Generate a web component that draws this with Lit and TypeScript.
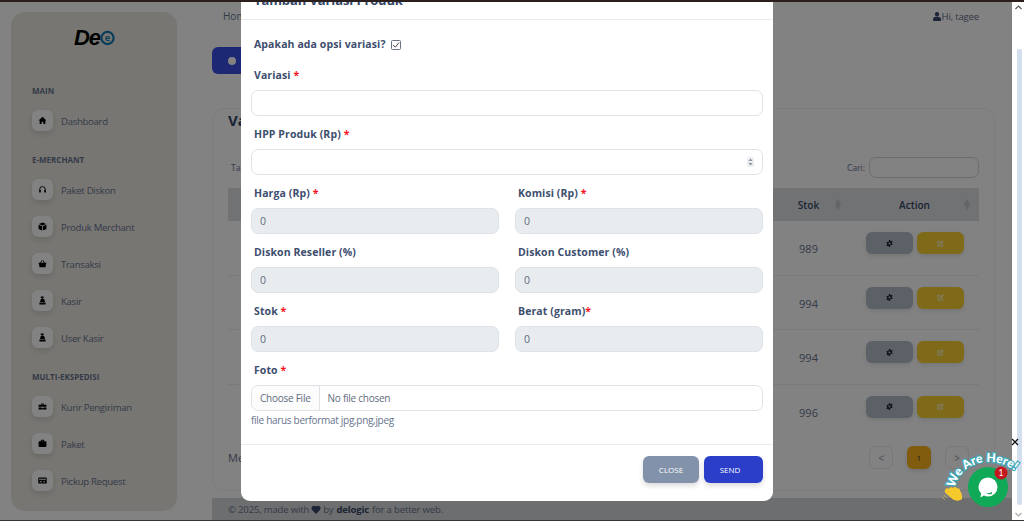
import { LitElement, css, html, svg } from 'lit';
import { customElement } from 'lit/decorators.js';

const ICONS: Record<string, unknown> = {
  home: svg`<path d="M8 1.500 1 8h2v6h3.500v-4h3v4H13V8h2z"/>`,
  headset: svg`<path d="M2.500 9V7.500a5.500 5.500 0 0 1 11 0V9h-1.400V7.500a4.100 4.100 0 0 0-8.200 0V9z"/><rect x="2" y="8.500" width="3" height="5" rx="1.200"/><rect x="11" y="8.500" width="3" height="5" rx="1.200"/>`,
  cube: svg`<path d="M8 1 1.500 3.600 8 6.200l6.500-2.600zM1 4.800v7.600L7.300 15V7.400zM15 4.800 8.700 7.400V15l6.300-2.600z"/>`,
  basket: svg`<path d="M1 6.500h14V8h-.7l-1 6.500H2.700L1.700 8H1zM4 6.500 6.600 2l1.200.7-2.200 3.800zM12 6.500 9.400 2l-1.200.7 2.200 3.800z"/>`,
  register: svg`<path d="M5 1h5v3H8.300v1.500H11l1.500 5H3.500L5 5.500h2V4H5zM2.500 11.500h11V15h-11z"/>`,
  briefcase: svg`<path d="M5.500 3.500A1 1 0 0 1 6.500 2.500h3a1 1 0 0 1 1 1V5H15v3.500H1V5h4.500zM6.800 3.800V5h2.400V3.800zM1 9.700h5.500V11h3V9.700H15V13.500H1z"/>`,
  suitcase: svg`<path d="M5 4V2.800A1.300 1.300 0 0 1 6.300 1.500h3.400A1.300 1.300 0 0 1 11 2.800V4h2.500A1.500 1.500 0 0 1 15 5.500v7a1.500 1.500 0 0 1-1.500 1.500h-11A1.500 1.500 0 0 1 1 12.500v-7A1.500 1.500 0 0 1 2.500 4zM6.500 3v1h3V3z"/>`,
  card: svg`<path fill-rule="evenodd" d="M2 2.500h12A1.500 1.500 0 0 1 15.500 4v8a1.500 1.500 0 0 1-1.500 1.500H2A1.500 1.500 0 0 1 .5 12V4A1.500 1.500 0 0 1 2 2.500zM2 5v1.800h12V5zm1 4.500v1.500h4V9.500zm6.500 0v1.500h3V9.500z"/>`,
};

const NAV = [
  { title: 'Main', items: [['Dashboard', 'home']] },
  { title: 'E-Merchant', items: [['Paket Diskon', 'headset'], ['Produk Merchant', 'cube'], ['Transaksi', 'basket'], ['Kasir', 'register'], ['User Kasir', 'register']] },
  { title: 'Multi-Ekspedisi', items: [['Kurir Pengiriman', 'briefcase'], ['Paket', 'suitcase'], ['Pickup Request', 'card']] },
];

const ROWS = [989, 994, 994, 996];

@customElement('app-root')
export class AppRoot extends LitElement {
  static styles = css`
    :host {
      display: flex;
      flex-direction: column;
      position: relative;
      width: 1024px;
      height: 521px;
      overflow: hidden;
      font-family: 'Open Sans', sans-serif;
      background: #fff;
    }
    .edge { height: 2px; background: #2b1f1e; flex: none; }
    .edge.bottom { height: 1px; background: #333; }
    .screen { flex: 1; display: flex; min-height: 0; }
    .viewport {
      flex: 1;
      position: relative;
      display: flex;
      overflow: hidden;
      background: #fff;
    }
    .dim {
      position: absolute;
      inset: 0;
      background: rgba(0, 0, 0, 0.49);
    }

    /* sidebar */
    .sidebar-wrap { flex: none; width: 212px; padding: 10px 35px 9px 11px; box-sizing: border-box; display: flex; }
    .sidebar {
      flex: 1;
      background: #ecE8E2;
      border-radius: 14px;
      display: flex;
      flex-direction: column;
    }
    .logo {
      height: 52px;
      flex: none;
      display: flex;
      justify-content: center;
      align-items: center;
      border-bottom: 1px solid #e9e5df;
      box-sizing: border-box;
      padding-left: 1px;
    }
    .logo .de {
      font: italic 700 22px 'Liberation Sans', sans-serif;
      letter-spacing: -1px;
      color: #000;
    }
    .logo svg { width: 15px; height: 16px; }
    .sec {
      font-size: 8px;
      font-weight: 700;
      color: #67748e;
      text-transform: uppercase;
      margin: 0 0 0 21px;
      line-height: 12px;
    }
    .sec.first { margin-top: 21px; }
    .sec.next { margin-top: 23px; }
    .navs { display: flex; flex-direction: column; gap: 16px; margin: 13px 0 0 21px; }
    .nav { display: flex; align-items: center; gap: 8px; height: 21px; font-size: 9.600px; letter-spacing: -0.300px; color: #67748e; }
    .nav .t { padding-top: 1px; }
    .nav-ico {
      width: 21px;
      height: 21px;
      border-radius: 6px;
      background: #fff;
      box-shadow: 0 3px 6px rgba(0, 0, 0, 0.12);
      display: flex;
      align-items: center;
      justify-content: center;
    }
    .nav-ico svg { width: 9px; height: 9px; fill: #000; }

    /* main */
    .main { flex: 1; display: flex; flex-direction: column; min-width: 0; }
    .topbar {
      height: 28px;
      display: flex;
      align-items: center;
      justify-content: space-between;
      padding: 0 33px 0 11px;
      font-size: 10px;
      color: #67748e;
      flex: none;
    }
    .hi { display: flex; align-items: center; gap: 1px; color: #5f6c86; font-size: 9.600px; letter-spacing: -0.200px; }
    .hi svg { width: 8px; height: 9px; fill: #3a4a6b; }
    .btn-add {
      margin-top: 17px;
      align-self: flex-start;
      height: 27px;
      width: 130px;
      border-radius: 6px;
      background: #3a4fe6;
      color: #fff;
      display: flex;
      align-items: center;
      padding-left: 16px;
      box-sizing: border-box;
      font-size: 9px;
      gap: 6px;
      font-weight: 700;
      flex: none;
    }
    .btn-add i { width: 8px; height: 8px; border-radius: 50%; background: #fff; }
    .card {
      margin: 34px 17px 0 0;
      height: 383px;
      flex: none;
      box-sizing: border-box;
      border: 1px solid #f3f3f3;
      border-radius: 12px;
      padding: 0 15px;
      display: flex;
      flex-direction: column;
    }
    .card h3 { margin: 0; font-size: 15px; line-height: 22px; color: #344767; font-weight: 700; }
    .tools {
      display: flex;
      align-items: center;
      justify-content: space-between;
      margin-top: 26px;
      padding-left: 3px;
      font-size: 8.500px;
      color: #67748e;
    }
    .search { display: flex; align-items: center; gap: 4px; }
    .search span { width: 110px; height: 21px; box-sizing: border-box; border: 1px solid #d2d6da; border-radius: 7px; }
    .table { margin-top: 10px; }
    .thead, .trow { display: grid; grid-template-columns: 1fr 69px 129px; }
    .thead { height: 33px; background: #dde0e3; font-size: 10px; font-weight: 600; color: #344767; align-items: center; }
    .th { position: relative; text-align: center; }
    .th.stok { padding-right: 14px; }
    .th::after {
      content: '';
      position: absolute;
      right: 9px;
      top: 50%;
      margin-top: -6px;
      width: 6px;
      height: 12px;
      background: #c4c7cc;
      clip-path: polygon(50% 0, 100% 50%, 50% 100%, 0 50%);
    }
    .trow { height: 54.500px; border-bottom: 1px solid #f0f0f0; box-sizing: border-box; font-size: 11px; color: #67748e; }
    .trow:last-child { border-bottom: none; }
    .td-stok { display: flex; align-items: center; justify-content: center; padding: 2px 14px 0 0; }
    .td-act { display: flex; justify-content: center; gap: 4px; padding-top: 11px; }
    .act { width: 47px; height: 22px; border-radius: 6px; display: flex; align-items: center; justify-content: center; box-shadow: 0 2px 4px rgba(0, 0, 0, 0.1); }
    .act.gray { background: #b5bccb; }
    .act.yellow { background: #fad132; }
    .act svg { width: 7px; height: 7px; }
    .pager-row { display: flex; justify-content: space-between; align-items: center; margin-top: 7px; font-size: 11px; color: #67748e; }
    .pager { display: flex; gap: 14px; padding-right: 10px; }
    .pg {
      width: 24px;
      height: 23px;
      border-radius: 6px;
      box-sizing: border-box;
      display: flex;
      align-items: center;
      justify-content: center;
      font-size: 10px;
      color: #8a95a8;
      border: 1px solid #ececec;
    }
    .pg.on { background: #ffb51c; border: none; color: #444; font-size: 8px; box-shadow: 0 2px 4px rgba(0, 0, 0, 0.12); }
    .foot {
      margin-top: auto;
      height: 22px;
      background: #d6d7d9;
      display: flex;
      align-items: center;
      padding-left: 16px;
      font-size: 9.500px;
      letter-spacing: -0.150px;
      color: #67748e;
      flex: none;
    }
    .foot b { color: #344767; margin: 0 3px; font-weight: 700; }
    .foot svg { width: 10px; height: 9px; fill: #344767; margin: 0 2px; }
    .foot span { white-space: pre; }

    /* modal */
    .modal {
      position: absolute;
      left: 241px;
      top: -22px;
      width: 532px;
      height: 521px;
      background: #fff;
      border-radius: 9px;
      display: flex;
      flex-direction: column;
      box-sizing: border-box;
    }
    .m-head {
      height: 40px;
      flex: none;
      box-sizing: border-box;
      border-bottom: 1px solid #e9ecef;
      padding-left: 13px;
      display: flex;
      align-items: center;
      font-size: 13px;
      letter-spacing: -0.100px;
      font-weight: 700;
      color: #344767;
    }
    .m-body { flex: 1; padding: 15px 10px 0; }
    label, .lab { display: block; padding-left: 3px; font-size: 10.500px; line-height: 19px; font-weight: 700; color: #3d4e6e; letter-spacing: 0.100px; }
    label em, .lab em { font-style: normal; color: #f5141e; }
    .opt { display: flex; align-items: center; gap: 5px; margin-bottom: 12px; }
    .opt svg { width: 10px; height: 10px; }
    .field { margin-bottom: 9px; position: relative; }
    .ctl {
      display: block;
      width: 100%;
      height: 26px;
      margin-top: 5px;
      box-sizing: border-box;
      border: 1px solid #dfe3e8;
      border-radius: 7px;
      background: #fff;
      padding: 0 8px;
      font: 10.500px 'Open Sans', sans-serif;
      color: #5f6b7d;
      outline: none;
    }
    .ctl:disabled { background: #e9ecef; color: #5f6b7d; opacity: 1; }
    .spin { position: absolute; right: 9px; bottom: 8px; width: 7px; height: 10px; }
    .two { display: grid; grid-template-columns: 248px 248px; column-gap: 16px; }
    .file {
      display: flex;
      align-items: center;
      height: 26px;
      margin-top: 5px;
      box-sizing: border-box;
      border: 1px solid #dfe3e8;
      border-radius: 7px;
      font-size: 10px;
      letter-spacing: -0.250px;
      color: #5f6b7d;
    }
    .file .pick { height: 100%; display: flex; align-items: center; padding: 0 8px; border-right: 1px solid #dfe3e8; background: #fcfcfd; border-radius: 7px 0 0 7px; margin-right: 8px; }
    .hint { font-size: 10px; letter-spacing: -0.300px; line-height: 15px; margin-top: 2px; color: #67748e; }
    .m-foot {
      height: 57px;
      flex: none;
      box-sizing: border-box;
      border-top: 1px solid #e9ecef;
      display: flex;
      justify-content: flex-end;
      gap: 5px;
      padding: 11px 10px 0 0;
    }
    .m-btn {
      height: 27px;
      border-radius: 6px;
      display: flex;
      align-items: center;
      justify-content: center;
      color: #fff;
      font-size: 8px;
      text-transform: uppercase;
      box-shadow: 0 3px 5px rgba(0, 0, 0, 0.14);
    }
    .m-btn.close { width: 56px; background: #8392ab; }
    .m-btn.send { width: 59px; box-sizing: border-box; padding-right: 7px; background: #2a3ec9; }

    /* scrollbar */
    .scroll { flex: none; width: 12px; background: #fff; display: flex; flex-direction: column; align-items: center; }
    .scroll svg { width: 7px; height: 5px; flex: none; margin: 3px 0; }
    .thumb { width: 5px; height: 456px; background: #d3dfee; margin: 36px 0 0 2px; border-radius: 2px; }

    /* chat widget */
    .chat { position: absolute; left: 934px; top: 436px; width: 90px; height: 85px; overflow: visible; }
    .chat text { font-family: Lato, sans-serif; }
  `;

  private _nav() {
    return NAV.map((sec, i) => html`
      <div class="sec ${i === 0 ? 'first' : 'next'}">${sec.title}</div>
      <div class="navs">
        ${sec.items.map(([label, icon]) => html`
          <div class="nav">
            <span class="nav-ico"><svg viewBox="0 0 16 16">${ICONS[icon]}</svg></span>
            <span class="t">${label}</span>
          </div>
        `)}
      </div>
    `);
  }

  private _field(label: string, req: boolean) {
    return html`
      <div class="field">
        <label>${label}${req ? html` <em>*</em>` : ''}</label>
        <input class="ctl" disabled value="0" />
      </div>
    `;
  }

  private _table() {
    return html`
      <div class="table">
        <div class="thead">
          <span></span><span class="th stok">Stok</span><span class="th">Action</span>
        </div>
        ${ROWS.map((stok) => html`
          <div class="trow">
            <span></span>
            <span class="td-stok">${stok}</span>
            <span class="td-act">
              <span class="act gray"><svg viewBox="0 0 16 16"><path fill="#1d2433" fill-rule="evenodd" d="M6.500 0h3l.4 2.300 1.500.7L13.500 1.800l1.700 2.600-1.700 1.500v2.200l1.700 1.500-1.700 2.600-2.100-1.200-1.500.7L9.500 16h-3l-.4-2.300-1.500-.7-2.100 1.200L.800 11.600l1.700-1.500V7.900L.800 6.400l1.700-2.600L4.600 5l1.500-.7zM8 5.500a2.500 2.500 0 1 0 0 5 2.500 2.500 0 0 0 0-5z"/></svg></span>
              <span class="act yellow"><svg viewBox="0 0 16 16"><path fill="none" stroke="#fff" stroke-width="1.800" d="M13 9.500V14H2V3h5"/><path fill="#fff" d="M6 8l7-7 2 2-7 7H6z"/></svg></span>
            </span>
          </div>
        `)}
      </div>
    `;
  }

  private _modal() {
    return html`
      <div class="modal">
        <div class="m-head">Tambah Variasi Produk</div>
        <div class="m-body">
          <div class="opt">
            <span class="lab">Apakah ada opsi variasi?</span>
            <svg viewBox="0 0 10 10"><rect x=".5" y=".5" width="9" height="9" rx="1" fill="none" stroke="#6b7280"/><path d="M2.200 5 4.300 7.200 8 2.500" fill="none" stroke="#444" stroke-width="1"/></svg>
          </div>
          <div class="field">
            <label>Variasi <em>*</em></label>
            <input class="ctl" />
          </div>
          <div class="field">
            <label>HPP Produk (Rp) <em>*</em></label>
            <input class="ctl" />
            <svg class="spin" viewBox="0 0 7 10"><rect width="7" height="10" rx="1.500" fill="#eceef1"/><path d="M3.500 1.500 5.500 4h-4zM3.500 8.500 1.500 6h4z" fill="#8b93a0"/></svg>
          </div>
          <div class="two">
            ${this._field('Harga (Rp)', true)}
            ${this._field('Komisi (Rp)', true)}
            ${this._field('Diskon Reseller (%)', false)}
            ${this._field('Diskon Customer (%)', false)}
            ${this._field('Stok', true)}
            <div class="field">
              <label>Berat (gram)<em>*</em></label>
              <input class="ctl" disabled value="0" />
            </div>
          </div>
          <div class="lab">Foto <em>*</em></div>
          <div class="file"><span class="pick">Choose File</span>No file chosen</div>
          <div class="hint">file harus berformat jpg,png,jpeg</div>
        </div>
        <div class="m-foot">
          <span class="m-btn close">Close</span>
          <span class="m-btn send">Send</span>
        </div>
      </div>
    `;
  }

  private _chat() {
    return html`
      <svg class="chat" viewBox="0 0 90 85">
        <defs><path id="arc" d="M21 52 C 25 28, 60 13, 88 41 L 98 52"/></defs>
        <path d="M78 3l6 6M84 3l-6 6" stroke="#111" stroke-width="1.300"/>
        <circle cx="54" cy="51" r="20" fill="#0fa958"/>
        <path d="M54 41.500a9.500 9.500 0 0 1 0 19c-1.400 0-2.800-.3-4-.9l-3.700 1.900.9-4a9.500 9.500 0 0 1 6.800-16z" fill="#fff"/>
        <path d="M52 56.500c2 1 4.500.8 6-.7l-.2 2.200c-2 .6-4.200.2-5.800-1.500z" fill="#0fa958"/>
        <text font-size="12.200" font-weight="900" fill="#fff" stroke="#3fa8b8" stroke-width="2.400" paint-order="stroke">
          <textPath href="#arc">We Are Here!</textPath>
        </text>
        <circle cx="67" cy="37" r="6.500" fill="#c4161c"/>
        <text x="67" y="40" font-size="8.500" fill="#fff" text-anchor="middle">1</text>
        <path fill="#f6c92c" d="M11 54c1-2 3-2 4-1 0-2 3-2.500 4-1 1-1.500 3.500-1 4 .5 1.500-.5 3 .5 3 2 1.500 2.500 2.500 5.500 2 8.500-2.500 2.500-7 2-9.500 0L11.500 57c-.8-.8-1-2-.5-3z"/>
        <path d="M8 61l3 3M10 59l2.500 2.500" stroke="#c9b24a" stroke-width=".8" fill="none"/>
      </svg>
    `;
  }

  render() {
    return html`
      <div class="edge"></div>
      <div class="screen">
        <div class="viewport">
          <div class="sidebar-wrap">
            <aside class="sidebar">
              <div class="logo">
                <span class="de">De</span>
                <svg viewBox="0 0 16 16">
                  <circle cx="8" cy="8" r="6.500" fill="none" stroke="#1279b0" stroke-width="2.400"/>
                  <text x="8" y="11" font-size="10" font-weight="700" text-anchor="middle" fill="#1279b0">e</text>
                </svg>
              </div>
              ${this._nav()}
            </aside>
          </div>
          <div class="main">
            <div class="topbar">
              <span>Home</span>
              <span class="hi"><svg viewBox="0 0 14 16"><circle cx="7" cy="4" r="3.800"/><path d="M0 16v-2.500A5 5 0 0 1 5 8.500h4a5 5 0 0 1 5 5V16z"/></svg>Hi, tagee</span>
            </div>
            <div class="btn-add"><i></i>Tambah</div>
            <section class="card">
              <h3>Variasi Produk</h3>
              <div class="tools">
                <span>Tampilkan</span>
                <span class="search">Cari: <span></span></span>
              </div>
              ${this._table()}
              <div class="pager-row">
                <span>Menampilkan</span>
                <span class="pager">
                  <span class="pg">&lt;</span><span class="pg on">1</span><span class="pg">&gt;</span>
                </span>
              </div>
            </section>
            <footer class="foot">
              <span>© 2025, made with</span>
              <svg viewBox="0 0 16 15"><path d="M8 15 1.500 8.300a4.300 4.300 0 0 1 6-6.100l.5.500.5-.5a4.300 4.300 0 0 1 6 6.100z"/></svg>
              <span>by</span><b>delogic</b><span>for a better web.</span>
            </footer>
          </div>
          <div class="dim"></div>
          ${this._modal()}
        </div>
        <div class="scroll">
          <svg viewBox="0 0 7 5"><path d="M.5 4 3.500 1l3 3" fill="none" stroke="#555" stroke-width="1.200"/></svg>
          <div class="thumb"></div>
          <svg style="margin-top:auto" viewBox="0 0 7 5"><path d="M.5 1l3 3 3-3" fill="none" stroke="#aaa" stroke-width="1.200"/></svg>
        </div>
      </div>
      <div class="edge bottom"></div>
      ${this._chat()}
    `;
  }
}
